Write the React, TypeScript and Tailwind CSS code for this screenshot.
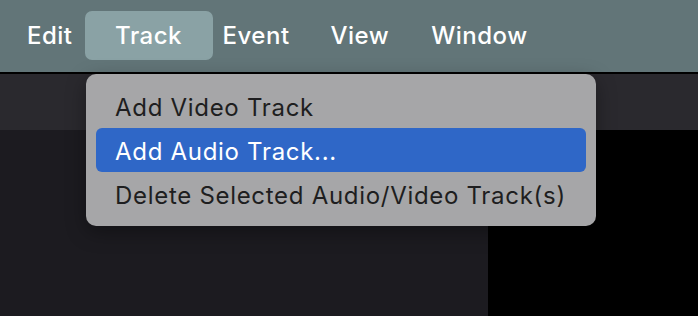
import type { ReactNode } from 'react'

const font = { fontFamily: 'Inter, "Noto Sans", "Liberation Sans", sans-serif' }

function MenuTitle({ label, active, className }: { label: string; active?: boolean; className?: string }) {
  return (
    <div
      className={`flex h-[49px] items-center rounded-[7px] text-[24px] font-medium tracking-[0.5px] text-white ${
        active ? 'bg-[#8aa2a5]' : ''
      } ${className ?? ''}`}
    >
      {label}
    </div>
  )
}

function MenuItem({ children, selected }: { children: ReactNode; selected?: boolean }) {
  return (
    <div
      className={`flex h-[44px] items-center rounded-[6px] px-[19px] pt-[3px] text-[24px] tracking-[0.7px] ${
        selected ? 'bg-[#2f67c7] text-white' : 'text-[#1e1e20]'
      }`}
    >
      {children}
    </div>
  )
}

export default function App() {
  return (
    <div className="relative flex h-[316px] w-[698px] flex-col overflow-hidden bg-[#1c1c20]" style={font}>
      {/* menu bar */}
      <div className="flex h-[72px] items-center bg-[#627578] pl-[27px] pb-[1px]">
        <MenuTitle label="Edit" />
        <MenuTitle label="Track" active className="ml-[12px] w-[128px] justify-center" />
        <MenuTitle label="Event" className="ml-[10px]" />
        <MenuTitle label="View" className="ml-[41px]" />
        <MenuTitle label="Window" className="ml-[42px]" />
      </div>
      <div className="h-[2px] bg-black" />

      {/* window content behind the menu */}
      <div className="h-[56px] bg-[#2a292e]" />
      <div className="flex flex-1">
        <div className="w-[488px] bg-[#1c1b20]" />
        <div className="flex-1 bg-black" />
      </div>

      {/* dropdown */}
      <div className="absolute left-[86px] top-[74px] flex w-[510px] flex-col rounded-[10px] bg-[#a6a6a8] px-[10px] pt-[10px] pb-[10px] shadow-[0_6px_20px_rgba(0,0,0,0.35)]">
        <MenuItem>Add Video Track</MenuItem>
        <MenuItem selected>Add Audio Track...</MenuItem>
        <MenuItem>Delete Selected Audio/Video Track(s)</MenuItem>
      </div>
    </div>
  )
}
